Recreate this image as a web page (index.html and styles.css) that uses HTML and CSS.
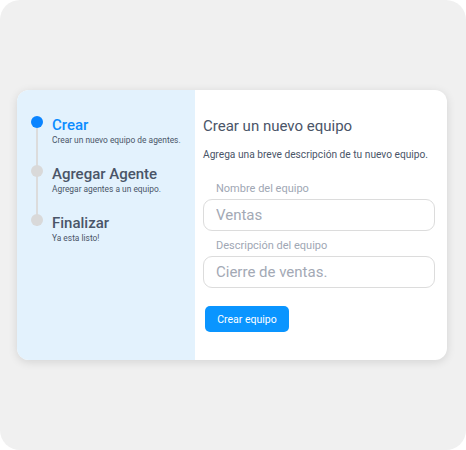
FILE: index.html
```html
<!DOCTYPE html>
<html lang="es">
<head>
  <meta charset="UTF-8" />
  <meta name="viewport" content="width=device-width, initial-scale=1.0" />
  <title>Crear equipo</title>
  <link rel="stylesheet" href="styles.css">
</head>
<body>

  <div class="frame">
    <div class="card">

      <!-- Steps -->
      <aside class="steps-panel">
        <div class="steps">
          <div class="step active">
            <span class="dot"></span>
            <div class="step-text">
              <h3>Crear</h3>
              <p>Crear un nuevo equipo de agentes.</p>
            </div>
          </div>
          <div class="step">
            <span class="dot"></span>
            <div class="step-text">
              <h3>Agregar Agente</h3>
              <p>Agregar agentes a un equipo.</p>
            </div>
          </div>
          <div class="step">
            <span class="dot"></span>
            <div class="step-text">
              <h3>Finalizar</h3>
              <p>Ya esta listo!</p>
            </div>
          </div>
        </div>
      </aside>

      <!-- Form -->
      <section class="form-panel">
        <h2>Crear un nuevo equipo</h2>
        <p class="intro">Agrega una breve descripción de tu nuevo equipo.</p>
        <form>
          <label class="field-label" for="nombre">Nombre del equipo</label>
          <input type="text" id="nombre" class="input-field" placeholder="Ventas" />
          <label class="field-label" for="descripcion">Descripción del equipo</label>
          <input type="text" id="descripcion" class="input-field" placeholder="Cierre de ventas." />
          <button type="submit" class="create-btn">Crear equipo</button>
        </form>
      </section>

    </div>
  </div>

</body>
</html>
```

FILE: styles.css
```css
/* Reset & Base */
* {
  margin: 0;
  padding: 0;
  box-sizing: border-box;
}
body {
  font-family: Roboto, 'Liberation Sans', sans-serif;
  background: #fff;
  color: #4a5568;
}

/* Outer frame */
.frame {
  width: 466px;
  height: 450px;
  background: #f0f0f0;
  border-radius: 20px;
  padding: 90px 0 0 17px;
}

/* Card */
.card {
  width: 430px;
  height: 270px;
  display: flex;
  background: #fff;
  border-radius: 12px;
  overflow: hidden;
  box-shadow: 0 2px 10px rgba(0, 0, 0, 0.12);
}

/* Steps panel */
.steps-panel {
  width: 178px;
  background: #e3f2fd;
  padding: 26px 0 0 14px;
}
.steps {
  position: relative;
  display: flex;
  flex-direction: column;
  gap: 20px;
}
.steps::before {
  content: '';
  position: absolute;
  left: 5px;
  top: 6px;
  height: 104px;
  width: 2px;
  background: #dcdcdc;
}
.step {
  display: flex;
  gap: 9px;
}
.dot {
  position: relative;
  flex: none;
  width: 12px;
  height: 12px;
  border-radius: 50%;
  background: #d9d9d9;
}
.step.active .dot {
  background: #0a84ff;
}
.step-text h3 {
  font-size: 15px;
  line-height: 18px;
  font-weight: 500;
  color: #4a5568;
}
.step.active h3 {
  color: #0a8cff;
}
.step-text p {
  font-size: 8.4px;
  line-height: 10px;
  margin-top: 1px;
  color: #4a5568;
}

/* Form panel */
.form-panel {
  flex: 1;
  padding: 27px 12px 0 8px;
}
.form-panel h2 {
  font-size: 15px;
  line-height: 18px;
  font-weight: 400;
  color: #4a5568;
}
.intro {
  font-size: 10.2px;
  line-height: 12px;
  margin-top: 14px;
}
form {
  display: flex;
  flex-direction: column;
  align-items: flex-start;
}
.field-label {
  font-size: 11px;
  line-height: 13px;
  color: #a0a7b4;
  padding-left: 13px;
  margin-top: 8px;
}
form .field-label:first-child {
  margin-top: 21px;
}
.input-field {
  width: 100%;
  height: 32px;
  margin-top: 4px;
  padding: 0 12px;
  border: 1px solid #dcdcdc;
  border-radius: 9px;
  background: #fff;
  font-family: inherit;
  font-size: 15px;
  color: #4a5568;
}
.input-field::placeholder {
  color: #a3a9b5;
}
.input-field:focus {
  outline: none;
  border-color: #0a8cff;
}

/* Button */
.create-btn {
  margin-top: 18px;
  margin-left: 2px;
  width: 84px;
  height: 26px;
  border: none;
  border-radius: 5px;
  background: #0a95ff;
  color: #fff;
  font-family: inherit;
  font-size: 10.5px;
  cursor: pointer;
}
.create-btn:hover {
  background: #0084ea;
}
```
